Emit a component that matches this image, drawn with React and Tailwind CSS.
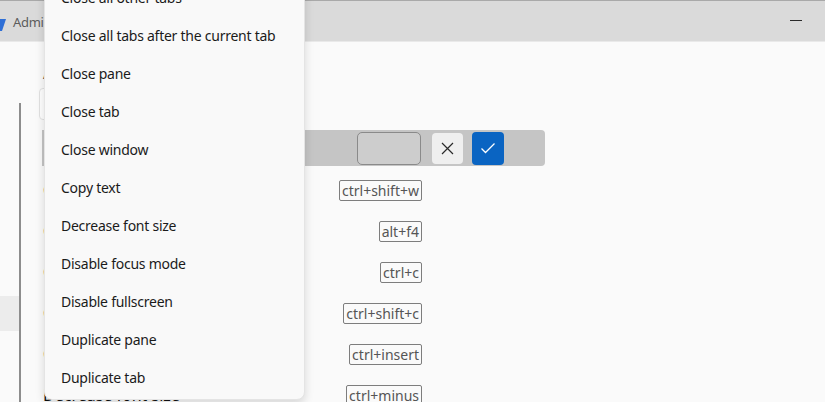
import React from "react";

const menuItems = [
  "Close all other tabs",
  "Close all tabs after the current tab",
  "Close pane",
  "Close tab",
  "Close window",
  "Copy text",
  "Decrease font size",
  "Disable focus mode",
  "Disable fullscreen",
  "Duplicate pane",
  "Duplicate tab",
];

const rows = [
  ["Close pane", "ctrl+shift+w"],
  ["Close window", "alt+f4"],
  ["Copy text", "ctrl+c"],
  ["Copy text", "ctrl+shift+c"],
  ["Copy text", "ctrl+insert"],
  ["Decrease font size", "ctrl+minus"],
];

export default function App() {
  return (
    <div className="relative w-[825px] h-[402px] overflow-hidden bg-[#fafafa] font-['Noto_Sans',sans-serif]">
      {/* title bar */}
      <div className="h-[42px] border-t border-[#a9a9a9] border-b border-b-[#e9e9e9] bg-[#dadada] flex items-center">
        <svg width="14" height="14" viewBox="0 0 14 14" className="ml-[-8px] mt-[10px]">
          <polygon points="8,0 14,0 10,12 4,12" fill="#2f6fd6" />
        </svg>
        <span className="ml-[7px] mt-[4px] text-[13px] tracking-[-0.3px] text-[#5c5c5c]">Administrator: Windows PowerShell</span>
        <div className="flex-1" />
        <div className="w-[12px] h-[1px] bg-[#2a2a2a] mr-[23px] mt-[-2px]" />
      </div>

      {/* body */}
      <div className="flex">
        <div className="w-[19px] pt-[254px]">
          <div className="h-[35px] bg-[#ececec]" />
        </div>
        <div className="w-[2px] mt-[61px] h-[320px] bg-[#8d8d8d]" />
        <div className="pl-[21px] flex flex-col">
          <div className="mt-[20px] ml-[1px] h-[22px] text-[16px] text-[#555] leading-[22px]">Actions</div>
          <div className="mt-[4px] ml-[-3px] w-[220px] h-[32px] rounded-[4px] border border-[#e2e2e2] bg-white" />
          <div className="mt-[10px] w-[503px] h-[36px] rounded-r-[4px] bg-[#c5c5c5] flex items-center">
            <div className="ml-[315px] w-[64px] h-[33px] rounded-[5px] border-[1.5px] border-[#8a8a8a] bg-[#cdcdcd]" />
            <div className="ml-[11px] w-[31px] h-[31px] rounded-[4px] bg-[#efefef] flex items-center justify-center">
              <svg width="13" height="13" viewBox="0 0 13 13">
                <path d="M1 1 L12 12 M12 1 L1 12" stroke="#2a2a2a" strokeWidth="1.2" />
              </svg>
            </div>
            <div className="ml-[9px] w-[32px] h-[33px] rounded-[4px] bg-[#0a64c2] flex items-center justify-center">
              <svg width="16" height="12" viewBox="0 0 16 12">
                <path d="M1.5 6.5 L5.5 10.5 L14.5 1.5" stroke="#ffffff" strokeWidth="1.3" fill="none" />
              </svg>
            </div>
          </div>
          <div className="mt-[13px] w-[380px] flex flex-col">
            {rows.map(([label, key], i) => (
              <div key={i} className="h-[41px] flex justify-between items-start">
                <span className="ml-[1px] text-[16px] leading-[22px] text-[#111]">{label}</span>
                <span className="mt-[1px] h-[21px] px-[2px] border border-[#7d7d7d] rounded-[2px] text-[14px] leading-[19px] text-[#555]">
                  {key}
                </span>
              </div>
            ))}
          </div>
        </div>
      </div>

      {/* context menu */}
      <div className="absolute left-[44px] top-[-27px] w-[261px] pt-[4px] pb-[3px] bg-[#f9f9f9] rounded-[8px] border border-[#e4e4e4] shadow-[0_4px_10px_rgba(0,0,0,0.14)]">
        {menuItems.map((t) => (
          <div key={t} className="h-[38px] flex items-center pl-[16px] text-[14px] tracking-[-0.25px] text-[#1b1b1b]">
            {t}
          </div>
        ))}
      </div>
    </div>
  );
}
